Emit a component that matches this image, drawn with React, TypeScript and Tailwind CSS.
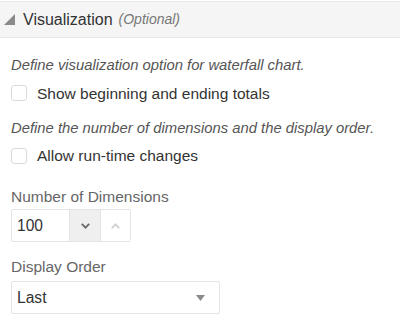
import React from "react";

export default function App() {
  return (
    <div className="w-[400px] h-[328px] bg-white overflow-hidden font-['Liberation_Sans',Arial,sans-serif] text-[#333]">
      <div className="mt-px h-[37px] bg-[#f5f5f5] border-y border-[#e8e8e8] flex items-center pl-[4px]">
        <svg width="11" height="11" viewBox="0 0 11 11" className="block">
          <polygon points="11,0 11,11 0,11" fill="#8a8a8a" />
        </svg>
        <span className="ml-[8px] text-[16px] text-[#333]">Visualization</span>
        <span className="ml-[6px] text-[14px] italic text-[#777]">(Optional)</span>
      </div>
      <div className="pl-[11px] flex flex-col">
        <div className="mt-[17px] leading-[20px] text-[14.8px] italic text-[#555]">
          Define visualization option for waterfall chart.
        </div>
        <div className="mt-[7px] flex items-start">
          <div className="mt-[3px] w-[16px] h-[16px] rounded-[3px] border border-[#dadada] bg-white" />
          <span className="ml-[10px] leading-[24px] text-[15.5px] text-[#333]">Show beginning and ending totals</span>
        </div>
        <div className="mt-[12px] leading-[20px] text-[14.8px] italic text-[#555] whitespace-nowrap">
          Define the number of dimensions and the display order.
        </div>
        <div className="mt-[6px] flex items-start">
          <div className="mt-[4px] w-[16px] h-[16px] rounded-[3px] border border-[#dadada] bg-white" />
          <span className="ml-[10px] leading-[24px] text-[15.5px] text-[#333]">Allow run-time changes</span>
        </div>
        <div className="mt-[19px] leading-[20px] text-[15.5px] text-[#666]">Number of Dimensions</div>
        <div className="mt-[2px] w-[120px] h-[33px] flex border border-[#e3e3e3] rounded-[2px]">
          <div className="w-[57px] flex items-center pl-[5px] text-[15.6px] text-[#333]">100</div>
          <div className="w-[31px] border-l border-[#e3e3e3] bg-[#efefef] flex items-center justify-center">
            <svg width="9" height="6" viewBox="0 0 9 6">
              <polyline points="0.8,0.8 4.5,4.6 8.2,0.8" fill="none" stroke="#6b6b6b" strokeWidth="1.8" />
            </svg>
          </div>
          <div className="flex-1 border-l border-[#e3e3e3] bg-white flex items-center justify-center">
            <svg width="9" height="6" viewBox="0 0 9 6">
              <polyline points="0.8,5.2 4.5,1.4 8.2,5.2" fill="none" stroke="#cfcfcf" strokeWidth="1.8" />
            </svg>
          </div>
        </div>
        <div className="mt-[15px] leading-[20px] text-[15.5px] text-[#666]">Display Order</div>
        <div className="mt-[4px] w-[209px] h-[33px] flex items-center justify-between border border-[#e3e3e3] rounded-[2px] pl-[5px] pr-[14px]">
          <span className="text-[15.6px] text-[#333]">Last</span>
          <svg width="9" height="6" viewBox="0 0 9 6">
            <polygon points="0,0 9,0 4.5,6" fill="#8a8a8a" />
          </svg>
        </div>
      </div>
    </div>
  );
}
